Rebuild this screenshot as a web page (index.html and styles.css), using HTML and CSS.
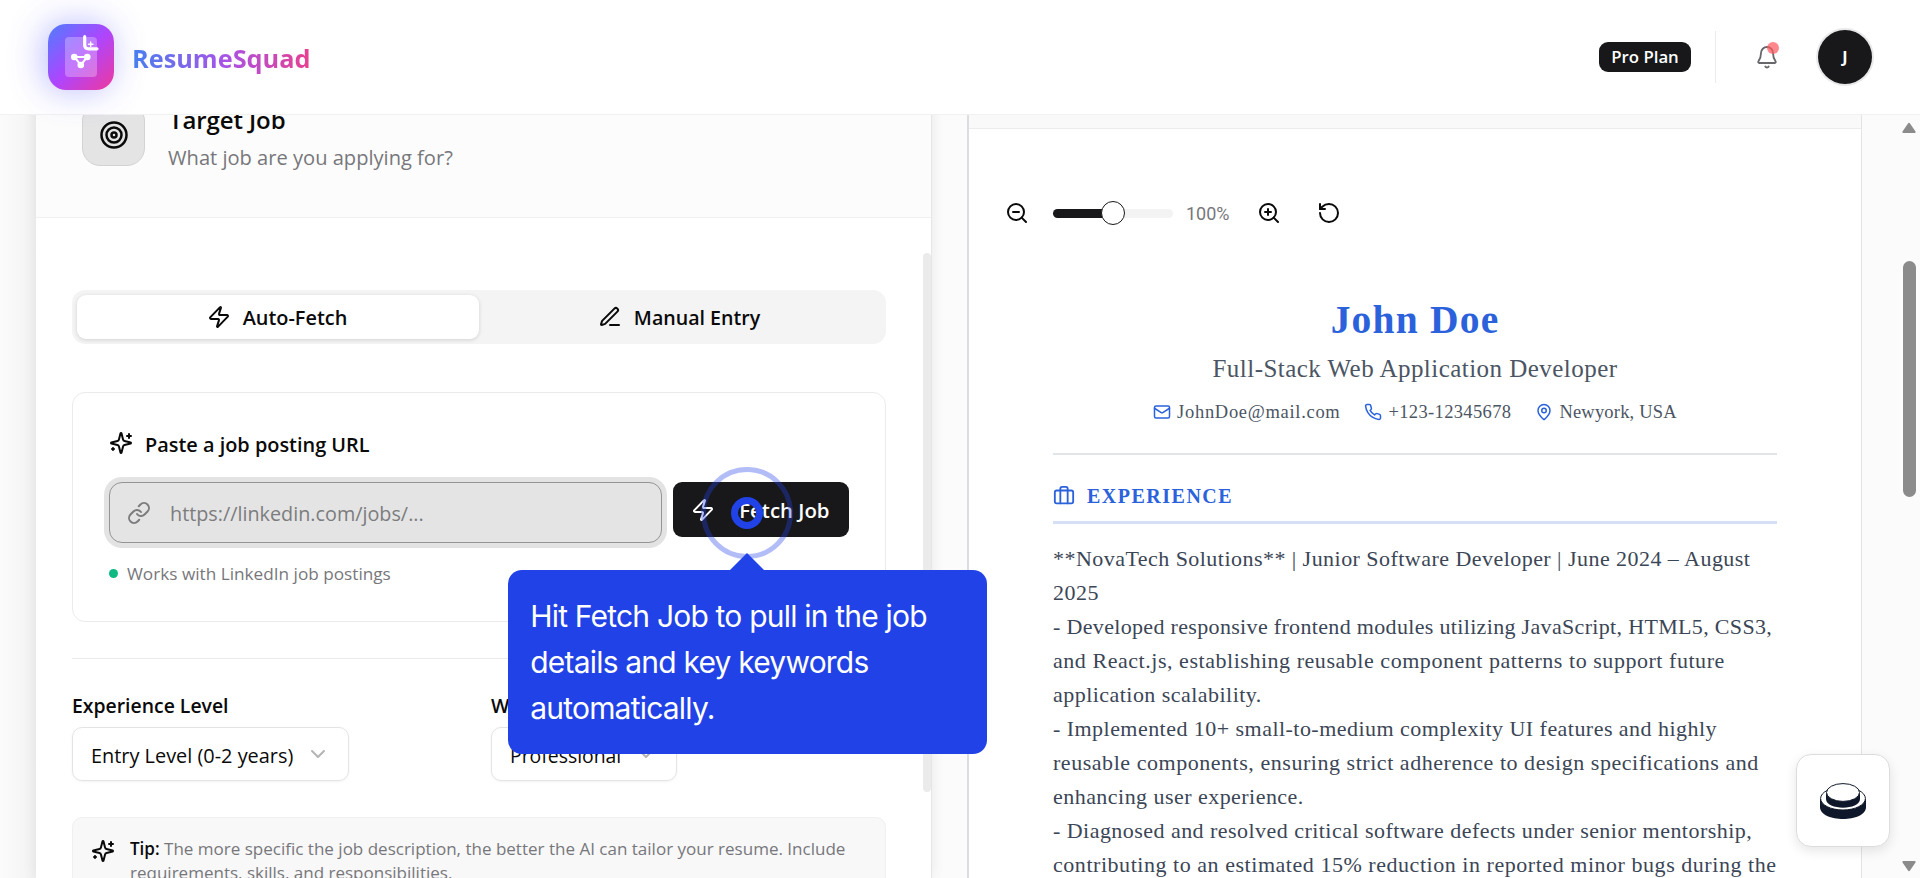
FILE: index.html
```html
<!DOCTYPE html>
<html lang="en">
<head>
    <meta charset="UTF-8">
    <meta name="viewport" content="width=device-width, initial-scale=1.0">
    <title>ResumeSquad</title>
    <link rel="stylesheet" href="styles.css">
</head>
<body>
    <header class="topbar">
        <div class="brand">
            <div class="logo">
                <svg width="66" height="66" viewBox="0 0 66 66" fill="none">
                    <rect x="17" y="13" width="32" height="40" rx="4" fill="#fff" fill-opacity=".28"/>
                    <path d="M36.7 12.700v8.300q0 3.800 3.800 3.800h8.500" stroke="#fff" stroke-width="3.2" stroke-linecap="round" stroke-linejoin="round"/>
                    <path d="M42.700 18v4.400M40.500 20.200h4.400" stroke="#fff" stroke-width="1.4" stroke-linecap="round"/>
                    <path d="M26.300 33h13l-6.500 8z" stroke="#fff" stroke-width="2"/>
                    <circle cx="26.300" cy="33" r="3.300" fill="#fff"/>
                    <circle cx="39.300" cy="33" r="3.300" fill="#fff"/>
                    <circle cx="32.800" cy="41" r="3.300" fill="#fff"/>
                </svg>
            </div>
            <span class="brand-name">ResumeSquad</span>
        </div>
        <div class="account">
            <span class="plan">Pro Plan</span>
            <span class="separator"></span>
            <div class="bell">
                <svg class="icon thin" width="24" height="24" viewBox="0 0 24 24"><path d="M6 8a6 6 0 0 1 12 0c0 4.5 1.5 7 2.6 8.4.5.7.1 1.6-.8 1.6H4.2c-.9 0-1.3-.9-.8-1.6C4.500 15 6 12.500 6 8"/><path d="M10.300 21.500a1.940 1.940 0 0 0 3.400 0"/></svg>
                <span class="bell-dot"></span>
            </div>
            <div class="avatar">J</div>
        </div>
    </header>

    <main class="workspace">
        <section class="job-card">
            <div class="job-head">
                <div class="job-icon">
                    <svg class="icon" width="30" height="30" viewBox="0 0 24 24"><circle cx="12" cy="12" r="10"/><circle cx="12" cy="12" r="6"/><circle cx="12" cy="12" r="2"/></svg>
                </div>
                <div>
                    <h2>Target Job</h2>
                    <p>What job are you applying for?</p>
                </div>
            </div>

            <div class="job-body">
                <div class="tabs">
                    <div class="tab active">
                        <svg class="icon" width="24" height="24" viewBox="0 0 24 24"><path d="M4 14a1 1 0 0 1-.78-1.630l9.900-10.200a.5.5 0 0 1 .86.460l-1.920 6.020A1 1 0 0 0 13 10h7a1 1 0 0 1 .78 1.630l-9.900 10.200a.5.5 0 0 1-.86-.460l1.920-6.020A1 1 0 0 0 11 14z"/></svg>
                        Auto-Fetch
                    </div>
                    <div class="tab manual">
                        <svg class="icon" width="24" height="24" viewBox="0 0 24 24"><path d="M12 20h9"/><path d="M16.376 3.622a1 1 0 0 1 3.002 3.002L7.368 18.635a2 2 0 0 1-.855.506l-2.872.838a.5.5 0 0 1-.62-.62l.838-2.872a2 2 0 0 1 .506-.854z"/></svg>
                        Manual Entry
                    </div>
                </div>

                <div class="url-card">
                    <div class="url-title">
                        <svg class="icon" width="24" height="24" viewBox="0 0 24 24"><path d="M9.937 15.500A2 2 0 0 0 8.500 14.063l-6.135-1.582a.5.5 0 0 1 0-.962L8.500 9.936A2 2 0 0 0 9.937 8.500l1.582-6.135a.5.5 0 0 1 .963 0L14.063 8.500A2 2 0 0 0 15.500 9.937l6.135 1.581a.5.5 0 0 1 0 .964L15.500 14.063a2 2 0 0 0-1.437 1.437l-1.582 6.135a.5.5 0 0 1-.963 0z"/><path d="M20 3v4M22 5h-4M4 17v2M5 18H3"/></svg>
                        <span>Paste a job posting URL</span>
                    </div>
                    <div class="url-row">
                        <div class="url-input">
                            <svg class="icon" width="24" height="24" viewBox="0 0 24 24"><path d="M10 13a5 5 0 0 0 7.540.540l3-3a5 5 0 0 0-7.070-7.070l-1.720 1.710"/><path d="M14 11a5 5 0 0 0-7.540-.540l-3 3a5 5 0 0 0 7.070 7.070l1.710-1.710"/></svg>
                            <span>https://linkedin.com/jobs/...</span>
                        </div>
                        <div class="fetch-btn">
                            <svg class="icon" width="24" height="24" viewBox="0 0 24 24"><path d="M4 14a1 1 0 0 1-.78-1.630l9.900-10.200a.5.5 0 0 1 .86.460l-1.920 6.020A1 1 0 0 0 13 10h7a1 1 0 0 1 .78 1.630l-9.900 10.200a.5.5 0 0 1-.86-.460l1.920-6.020A1 1 0 0 0 11 14z"/></svg>
                            Fetch Job
                            <!-- guided tour hotspot and its tooltip -->
                            <span class="pulse"></span>
                            <span class="hotspot"></span>
                            <div class="tooltip">Hit Fetch Job to pull in the job<br>details and key keywords<br>automatically.</div>
                        </div>
                    </div>
                    <div class="hint"><span class="dot"></span>Works with LinkedIn job postings</div>
                </div>

                <div class="options">
                    <div>
                        <label>Experience Level</label>
                        <div class="select level">
                            <span>Entry Level (0-2 years)</span>
                            <svg class="icon" width="24" height="24" viewBox="0 0 24 24"><path d="m6 9 6 6 6-6"/></svg>
                        </div>
                    </div>
                    <div>
                        <label>Writing Style</label>
                        <div class="select style">
                            <span>Professional</span>
                            <svg class="icon" width="24" height="24" viewBox="0 0 24 24"><path d="m6 9 6 6 6-6"/></svg>
                        </div>
                    </div>
                </div>

                <div class="tip">
                    <svg class="icon" width="24" height="24" viewBox="0 0 24 24"><path d="M9.937 15.500A2 2 0 0 0 8.500 14.063l-6.135-1.582a.5.5 0 0 1 0-.962L8.500 9.936A2 2 0 0 0 9.937 8.500l1.582-6.135a.5.5 0 0 1 .963 0L14.063 8.500A2 2 0 0 0 15.500 9.937l6.135 1.581a.5.5 0 0 1 0 .964L15.500 14.063a2 2 0 0 0-1.437 1.437l-1.582 6.135a.5.5 0 0 1-.963 0z"/><path d="M20 3v4M22 5h-4M4 17v2M5 18H3"/></svg>
                    <p><b>Tip:</b> The more specific the job description, the better the AI can tailor your resume. Include<br>requirements, skills, and responsibilities.</p>
                </div>
            </div>
            <span class="card-scroll"></span>
        </section>

        <section class="preview">
            <div class="preview-head"></div>
            <div class="zoom-bar">
                <svg class="icon" width="24" height="24" viewBox="0 0 24 24"><circle cx="11" cy="11" r="8"/><path d="m21 21-4.350-4.350M8 11h6"/></svg>
                <div class="slider"><span class="slider-fill"></span><span class="slider-thumb"></span></div>
                <span class="zoom-value">100%</span>
                <svg class="icon zoom-in" width="24" height="24" viewBox="0 0 24 24"><circle cx="11" cy="11" r="8"/><path d="m21 21-4.350-4.350M11 8v6M8 11h6"/></svg>
                <svg class="icon" width="24" height="24" viewBox="0 0 24 24"><path d="M3 12a9 9 0 1 0 9-9 9.750 9.750 0 0 0-6.740 2.740L3 8"/><path d="M3 3v5h5"/></svg>
            </div>

            <article class="resume">
                <div class="resume-head">
                    <h1>John Doe</h1>
                    <p class="role">Full-Stack Web Application Developer</p>
                    <div class="contacts">
                        <span class="mail"><svg class="icon" width="18" height="18" viewBox="0 0 24 24"><rect x="2" y="4" width="20" height="16" rx="2"/><path d="m22 7-8.970 5.700a1.940 1.940 0 0 1-2.060 0L2 7"/></svg>JohnDoe@mail.com</span>
                        <span class="phone"><svg class="icon" width="18" height="18" viewBox="0 0 24 24"><path d="M22 16.920v3a2 2 0 0 1-2.180 2 19.790 19.790 0 0 1-8.630-3.070 19.500 19.500 0 0 1-6-6 19.790 19.790 0 0 1-3.070-8.670A2 2 0 0 1 4.110 2h3a2 2 0 0 1 2 1.720c.127.960.361 1.903.7 2.810a2 2 0 0 1-.45 2.110L8.090 9.910a16 16 0 0 0 6 6l1.270-1.270a2 2 0 0 1 2.110-.45c.907.339 1.850.573 2.810.7A2 2 0 0 1 22 16.920z"/></svg>+123-12345678</span>
                        <span><svg class="icon" width="18" height="18" viewBox="0 0 24 24"><path d="M20 10c0 4.993-5.539 10.193-7.399 11.799a1 1 0 0 1-1.202 0C9.539 20.193 4 14.993 4 10a8 8 0 0 1 16 0"/><circle cx="12" cy="10" r="3"/></svg>Newyork, USA</span>
                    </div>
                </div>
                <h3>
                    <svg class="icon" width="22" height="22" viewBox="0 0 24 24"><path d="M16 20V4a2 2 0 0 0-2-2h-4a2 2 0 0 0-2 2v16"/><rect x="2" y="6" width="20" height="14" rx="2"/></svg>
                    EXPERIENCE
                </h3>
                <div class="entry">
                    <p>**NovaTech Solutions** | Junior Software Developer | June 2024 – August</p>
                    <p>2025</p>
                    <p class="tight">- Developed responsive frontend modules utilizing JavaScript, HTML5, CSS3,</p>
                    <p class="wide">and React.js, establishing reusable component patterns to support future</p>
                    <p>application scalability.</p>
                    <p>- Implemented 10+ small-to-medium complexity UI features and highly</p>
                    <p class="wide">reusable components, ensuring strict adherence to design specifications and</p>
                    <p>enhancing user experience.</p>
                    <p>- Diagnosed and resolved critical software defects under senior mentorship,</p>
                    <p class="wide">contributing to an estimated 15% reduction in reported minor bugs during the</p>
                </div>
            </article>
        </section>

        <div class="scrollbar">
            <svg width="14" height="12" viewBox="0 0 14 12"><path d="M6 1.500q1-1.500 2 0l5.500 8q.6 1.500-1 1.500h-11q-1.600 0-1-1.500z"/></svg>
            <span class="scroll-thumb"></span>
            <svg class="down" width="14" height="12" viewBox="0 0 14 12"><path d="M6 10.500q1 1.500 2 0l5.500-8q.6-1.500-1-1.500h-11q-1.600 0-1 1.500z"/></svg>
        </div>
    </main>

    <div class="widget">
        <svg width="46" height="36" viewBox="0 0 46 36">
            <path d="M0 16v8c0 16 46 16 46 0v-8z" fill="#0f172a"/>
            <ellipse cx="23" cy="15.500" rx="22.400" ry="11.500" fill="#fff" stroke="#0f172a"/>
            <path d="M6 10v6c0 11.500 34 11.500 34 0v-6z" fill="#0f172a"/>
            <ellipse cx="23" cy="9.500" rx="16.500" ry="8.900" fill="#fff" stroke="#0f172a"/>
        </svg>
    </div>
</body>
</html>
```
FILE: styles.css
```css
:root {
    --ink: #0a0a0a;
    --dark: #18181b;
    --muted: #77777b;
    --line: #ebebed;
    --blue: #2b62dc;
    --tour: #2142e7;
}

* {
    box-sizing: border-box;
    margin: 0;
    padding: 0;
}

body {
    height: 878px;
    overflow: hidden;
    font-family: "Open Sans", "Noto Sans", sans-serif;
    font-size: 20px;
    color: var(--ink);
    background: #fbfbfb;
    white-space: nowrap;
}

.icon {
    display: block;
    flex: none;
    fill: none;
    stroke: currentColor;
    stroke-width: 2;
    stroke-linecap: round;
    stroke-linejoin: round;
}

.icon.thin {
    stroke-width: 1.8;
}

/* top bar */

.topbar {
    position: relative;
    z-index: 5;
    height: 115px;
    padding: 0 48px;
    display: flex;
    align-items: center;
    justify-content: space-between;
    background: #fff;
    border-bottom: 1px solid #f1f1f2;
}

.brand {
    display: flex;
    align-items: center;
    gap: 18px;
}

.logo {
    width: 66px;
    height: 66px;
    border-radius: 18px;
    background: linear-gradient(135deg, #4f7dff, #ad46ff 50%, #f0389c);
    box-shadow: -4px 0 34px rgba(90, 90, 255, 0.42);
}

.brand-name {
    padding-top: 2px;
    font-size: 25.3px;
    font-weight: 700;
    line-height: 36px;
    background: linear-gradient(90deg, #4680ef, #a455e8 50%, #e8408f);
    background-clip: text;
    -webkit-background-clip: text;
    color: transparent;
}

.account {
    display: flex;
    align-items: center;
}

.plan {
    width: 92px;
    height: 30px;
    line-height: 30px;
    border-radius: 9px;
    background: var(--dark);
    color: #fff;
    font-size: 16.8px;
    font-weight: 600;
    text-align: center;
}

.separator {
    width: 1px;
    height: 52px;
    margin: 0 39px 0 24px;
    background: var(--line);
}

.bell {
    position: relative;
    margin-right: 39px;
    color: #66666b;
}

.bell-dot {
    position: absolute;
    top: -3px;
    right: 0;
    width: 12px;
    height: 12px;
    border-radius: 50%;
    background: rgba(255, 90, 96, 0.72);
}

.avatar {
    width: 54px;
    height: 54px;
    border-radius: 50%;
    background: var(--dark);
    box-shadow: 0 0 0 2px #e9e9ea;
    color: #fff;
    font-size: 16px;
    font-weight: 700;
    line-height: 54px;
    text-align: center;
}

/* two panes below the bar, scrolled a little under it */

.workspace {
    display: flex;
    height: 775px;
    margin-top: -12px;
    padding-left: 36px;
    background: linear-gradient(90deg, #fbfbfb, #f3f3f3 36px, #fbfbfb 36px);
}

.job-card {
    position: relative;
    width: 895px;
    background: #fff;
    box-shadow: 1px 0 0 #e6e6e6, 0 0 14px rgba(0, 0, 0, 0.09);
}

.job-head {
    display: flex;
    height: 115px;
    padding-left: 46px;
    gap: 23px;
    background: #fcfcfc;
    border-bottom: 1px solid #f0f0f0;
}

.job-icon {
    display: flex;
    width: 63px;
    height: 63px;
    align-items: center;
    justify-content: center;
    border: 1px solid #d3d3d5;
    border-radius: 18px;
    background: #e4e4e5;
}

.job-head h2 {
    padding-left: 1px;
    font-size: 24px;
    font-weight: 600;
    line-height: 34px;
    letter-spacing: -0.1px;
}

.job-head p {
    margin-top: 4px;
    font-size: 20.1px;
    line-height: 34px;
    color: var(--muted);
}

.job-body {
    padding: 72px 45px 0 36px;
}

.tabs {
    display: grid;
    grid-template-columns: 1fr 1fr;
    height: 54px;
    padding: 5px;
    border-radius: 13px;
    background: #f4f4f4;
}

.tab {
    display: flex;
    align-items: center;
    justify-content: center;
    gap: 12px;
    padding-right: 2px;
    border-radius: 9px;
    font-size: 19.9px;
    font-weight: 600;
}

.tab.active {
    background: #fff;
    box-shadow: 0 1px 4px rgba(0, 0, 0, 0.14);
}

.tab.manual {
    font-size: 19.6px;
}

.url-card {
    height: 230px;
    margin-top: 48px;
    padding: 35px 36px 0;
    border: 1px solid var(--line);
    border-radius: 13px;
}

.url-title {
    display: flex;
    align-items: center;
    gap: 12px;
    height: 30px;
    font-size: 19.9px;
    font-weight: 600;
}

.url-title span,
.url-input span,
.select span {
    padding-top: 2px;
}

.url-row {
    display: flex;
    align-items: flex-start;
    gap: 11px;
    margin-top: 24px;
}

.url-input {
    display: flex;
    align-items: center;
    gap: 19px;
    width: 554px;
    height: 61px;
    padding-left: 17px;
    border: 1px solid #949494;
    border-radius: 13px;
    background: #e4e4e4;
    box-shadow: 0 0 0 5px #e3e3e3;
    font-size: 19.8px;
    color: #7c7c7e;
}

.fetch-btn {
    position: relative;
    display: flex;
    align-items: center;
    gap: 24px;
    width: 176px;
    height: 55px;
    padding-left: 18px;
    border-radius: 9px;
    background: var(--dark);
    color: #fff;
    font-size: 20.4px;
    font-weight: 600;
}

.pulse {
    position: absolute;
    left: 28px;
    top: -15px;
    width: 92px;
    height: 92px;
    border: 5px solid rgba(33, 66, 231, 0.35);
    border-radius: 50%;
}

.hotspot {
    position: absolute;
    left: 58px;
    top: 15px;
    width: 32px;
    height: 32px;
    border: 7px solid var(--tour);
    border-radius: 50%;
}

.tooltip {
    position: absolute;
    z-index: 3;
    left: -165px;
    top: 88px;
    width: 479px;
    height: 184px;
    padding: 23px 22px;
    border-radius: 14px;
    background: var(--tour);
    color: #fff;
    font-family: Inter, sans-serif;
    font-size: 30px;
    font-weight: 400;
    line-height: 46px;
    letter-spacing: -0.8px;
}

.tooltip::before {
    content: "";
    position: absolute;
    left: 222px;
    top: -17px;
    border: 17px solid transparent;
    border-top: 0;
    border-bottom-color: var(--tour);
}

.hint {
    display: flex;
    align-items: center;
    gap: 9px;
    height: 26px;
    margin-top: 17px;
    font-size: 17.2px;
    color: var(--muted);
}

.dot {
    width: 9px;
    height: 9px;
    border-radius: 50%;
    background: #10b981;
}

.options {
    display: grid;
    grid-template-columns: 1fr 1fr;
    gap: 24px;
    margin-top: 36px;
    padding-top: 33px;
    border-top: 1px solid var(--line);
}

.options label {
    display: block;
    font-size: 19.4px;
    font-weight: 600;
    line-height: 28px;
}

.select {
    display: flex;
    align-items: center;
    justify-content: space-between;
    height: 54px;
    margin-top: 7px;
    padding: 0 18px;
    border: 1px solid #e4e4e7;
    border-radius: 10px;
    box-shadow: 0 1px 3px rgba(0, 0, 0, 0.05);
    font-size: 19.9px;
}

.select .icon {
    color: #b4b4b6;
}

.level {
    width: 277px;
}

.style {
    width: 186px;
    font-size: 19.4px;
}

.tip {
    display: flex;
    gap: 15px;
    height: 90px;
    margin-top: 36px;
    padding: 19px 18px;
    border: 1px solid #f0f0f1;
    border-radius: 10px;
    background: #f8f8f9;
    font-size: 17.03px;
    line-height: 24px;
    color: var(--muted);
}

.tip .icon {
    margin-top: 2px;
    color: var(--ink);
}

.tip b {
    font-weight: 600;
    color: var(--ink);
}

.card-scroll {
    position: absolute;
    right: 0;
    top: 150px;
    width: 8px;
    height: 539px;
    border-radius: 5px;
    background: #ebebec;
}

/* resume preview */

.preview {
    width: 895px;
    margin-left: 36px;
    border-left: 2px solid #dcdde1;
    border-right: 1px solid #e3e3e4;
    background: #fff;
}

.preview-head {
    height: 26px;
    background: #f9f9f9;
    border-bottom: 1px solid #ececec;
}

.zoom-bar {
    display: flex;
    align-items: center;
    height: 40px;
    margin-top: 64px;
    padding-left: 36px;
}

.slider {
    position: relative;
    width: 120px;
    height: 9px;
    margin: 0 13px 0 24px;
    border-radius: 5px;
    background: #f3f3f4;
}

.slider-fill {
    display: block;
    width: 50%;
    height: 100%;
    border-radius: 5px;
    background: var(--dark);
}

.slider-thumb {
    position: absolute;
    left: 48px;
    top: -7.500px;
    width: 24px;
    height: 24px;
    border: 1px solid var(--dark);
    border-radius: 50%;
    background: #fff;
}

.zoom-value {
    width: 71px;
    font-family: Roboto, sans-serif;
    font-size: 18px;
    font-weight: 400;
    color: var(--muted);
}

.zoom-in {
    margin-right: 36px;
}

.resume {
    width: 724px;
    margin: 64px 0 0 84px;
    font-family: "Liberation Serif", serif;
    color: #3b4656;
}

.resume-head {
    padding-bottom: 27px;
    border-bottom: 2px solid #e2e5e8;
    text-align: center;
    color: #4b5563;
}

.resume h1 {
    font-size: 39.5px;
    line-height: 46px;
    letter-spacing: 1.2px;
    color: var(--blue);
}

.role {
    margin-top: 7px;
    font-size: 25px;
    line-height: 38px;
    letter-spacing: 0.46px;
}

.contacts {
    display: flex;
    justify-content: center;
    gap: 24px;
    margin-top: 10px;
    font-size: 18.5px;
    line-height: 28px;
    letter-spacing: 0.2px;
}

.contacts span {
    display: flex;
    align-items: center;
    gap: 6px;
}

.contacts .mail {
    letter-spacing: 0.7px;
}

.contacts .phone {
    letter-spacing: 0.35px;
}

.resume .icon {
    color: var(--blue);
}

.resume h3 {
    display: flex;
    align-items: center;
    gap: 12px;
    margin-top: 25px;
    padding-bottom: 9px;
    border-bottom: 3px solid #d5dff5;
    font-size: 20px;
    line-height: 32px;
    letter-spacing: 1.5px;
    color: var(--blue);
}

.entry {
    margin-top: 18px;
    font-size: 22px;
    line-height: 34px;
    letter-spacing: 0.46px;
}

.tight {
    letter-spacing: 0.33px;
}

.wide {
    letter-spacing: 0.54px;
}

/* page scrollbar */

.scrollbar {
    display: flex;
    flex-direction: column;
    align-items: center;
    width: 16px;
    margin-left: 39px;
    padding: 19px 0 6px;
    fill: #8b8b8b;
}

.scroll-thumb {
    width: 13px;
    height: 236px;
    margin-top: 127px;
    border-radius: 7px;
    background: #8b8b8b;
}

.scrollbar .down {
    margin-top: auto;
}

.widget {
    position: fixed;
    right: 30px;
    bottom: 31px;
    z-index: 6;
    display: flex;
    width: 94px;
    height: 93px;
    align-items: center;
    justify-content: center;
    border: 1px solid #dcdcde;
    border-radius: 15px;
    background: #fff;
    box-shadow: 0 4px 12px rgba(0, 0, 0, 0.1);
}
```
